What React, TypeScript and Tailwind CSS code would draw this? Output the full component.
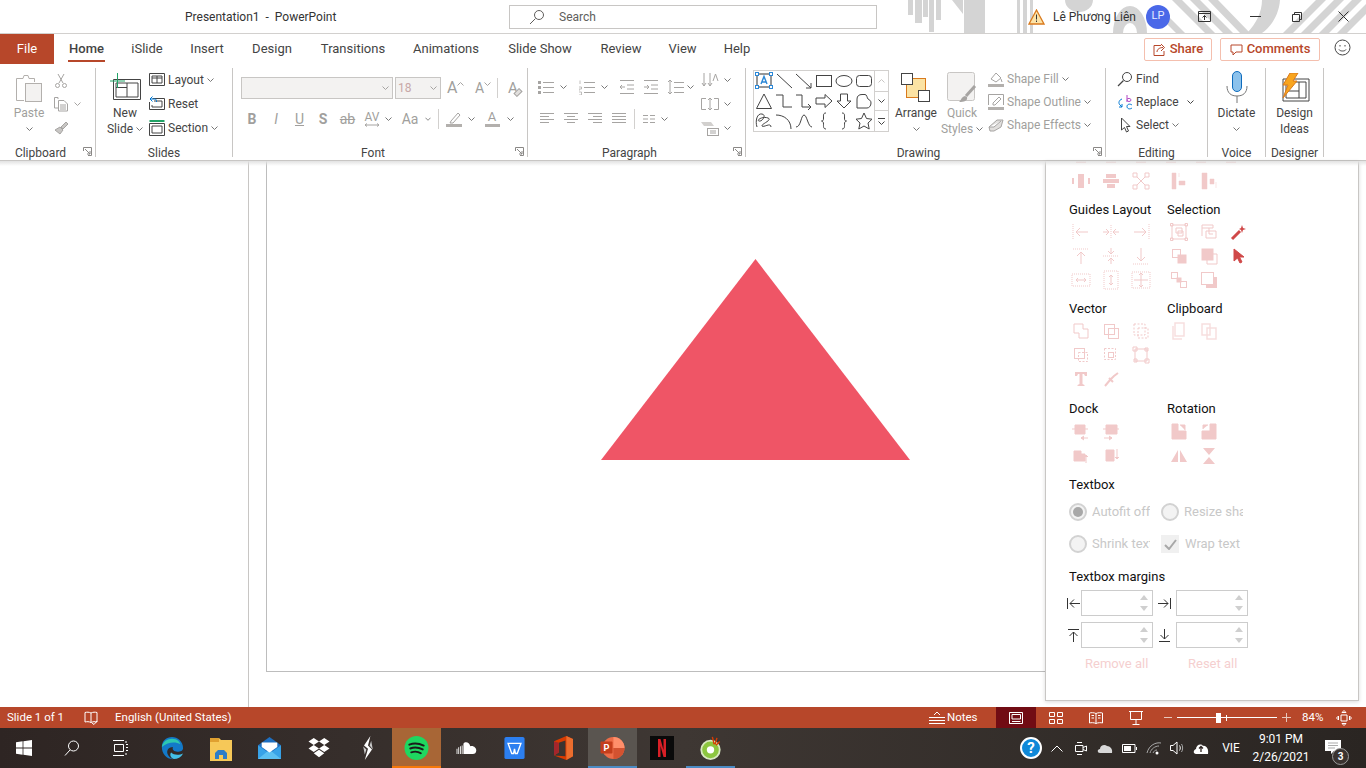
import type { ReactNode } from 'react'

const G = '#a6a4a2' // disabled ribbon icon
const D = '#444444' // enabled ribbon icon
const P = '#f1c9c9' // disabled panel icon

function Chev({ color = '#777777', className = '' }: { color?: string; className?: string }) {
  return (
    <svg width="7" height="4" viewBox="0 0 7 4" fill="none" stroke={color} className={className}>
      <path d="M.5.5 3.5 3.5 6.5.5" />
    </svg>
  )
}

function Ico({ w = 16, h = 16, c = D, children }: { w?: number; h?: number; c?: string; children: ReactNode }) {
  return (
    <svg width={w} height={h} viewBox={`0 0 ${w} ${h}`} fill="none" stroke={c} strokeWidth="1" className="shrink-0">
      {children}
    </svg>
  )
}

function Group({ label, className, launcher, children }: { label: string; className: string; launcher?: boolean; children: ReactNode }) {
  return (
    <div className={`relative flex h-[89px] shrink-0 flex-col border-r border-[#c8c6c4] ${className}`}>
      <div className="flex h-[77px] shrink-0">{children}</div>
      <div className={`text-center text-[12px] leading-[16px] text-[#444444] ${launcher ? 'pr-[14px]' : ''}`}>{label}</div>
      {launcher && (
        <svg width="9" height="9" viewBox="0 0 9 9" fill="none" stroke="#8a8886" className="absolute bottom-[1px] right-[3px]">
          <path d="M.5 4V.5H8.5V8.5H5M2 2 7 7M7 4V7H4" />
        </svg>
      )}
    </div>
  )
}

function Big({ icon, lines, chevLine, dim, className }: { icon: ReactNode; lines: string[]; chevLine?: boolean; dim?: boolean; className: string }) {
  return (
    <div className={`flex shrink-0 flex-col items-center pt-[2px] text-[12px] leading-[16px] ${dim ? 'text-[#a19f9d]' : 'text-[#444444]'} ${className}`}>
      <div className="flex h-[35px] items-center justify-center">{icon}</div>
      {lines.map((l, i) => (
        <div key={l} className="flex items-center gap-[3px] whitespace-nowrap">
          {l}
          {chevLine && i === lines.length - 1 && <Chev />}
        </div>
      ))}
      {!chevLine && lines.length === 1 && (
        <div className="flex h-[16px] items-center">
          <Chev />
        </div>
      )}
    </div>
  )
}

function Small({ icon, text, dim, chev = true, h = 'h-[24px]' }: { icon: ReactNode; text: string; dim?: boolean; chev?: boolean; h?: string }) {
  return (
    <div className={`flex items-center whitespace-nowrap text-[12px] ${h} ${dim ? 'text-[#a19f9d]' : 'text-[#444444]'}`}>
      <div className="flex w-[16px] justify-center">{icon}</div>
      <span className="ml-[3px]">{text}</span>
      {chev && <Chev className="ml-[3px]" />}
    </div>
  )
}

function Cell({ className, children }: { className: string; children: ReactNode }) {
  return <div className={`flex shrink-0 items-center justify-center ${className}`}>{children}</div>
}

const lines = (x1: number, x2: number, ys: number[]) => ys.map((y) => `M${x1} ${y}H${x2}`).join('')

const shapes: ReactNode[] = [
  <>
    <rect x="3" y="3" width="14" height="13" stroke="#333" />
    <rect x="1.5" y="1.5" width="3" height="3" fill="#fff" stroke="#2b88d8" />
    <rect x="15.5" y="1.5" width="3" height="3" fill="#fff" stroke="#2b88d8" />
    <rect x="1.5" y="14.5" width="3" height="3" fill="#fff" stroke="#2b88d8" />
    <rect x="15.5" y="14.5" width="3" height="3" fill="#fff" stroke="#2b88d8" />
    <path d="M7 13 10 5.5 13 13M8 11H12" stroke="#2b88d8" strokeWidth="1.4" />
  </>,
  <path d="M3 3 18 17" />,
  <path d="M2 3 17 17M17 12V17H12" />,
  <rect x="2.5" y="4.5" width="15" height="11" />,
  <ellipse cx="10" cy="10" rx="8" ry="5.5" />,
  <rect x="2.5" y="4.5" width="15" height="11" rx="3" />,
  <path d="M10 3 17.5 17.5H2.5Z" />,
  <path d="M2 4H9V16H18" />,
  <path d="M2 4H8V16H17M14 13 17 16 14 19" />,
  <path d="M2 7H11V3.5L18 10 11 16.5V13H2Z" />,
  <path d="M6.5 3H13.5V10H17L10 17 3 10H6.5Z" />,
  <path d="M3 8C3 5 5 3.5 8 3.5H11C13 3.5 13 7 14 8S17 9 17 12 15 17 13 17H3Z" />,
  <path d="M3 16C1 10 3 2 8 3S8 11 5 10 9 5 14 7 7 13 8 15 17 11 17 16" />,
  <path d="M2 4C10 4 17 9 17 18" />,
  <path d="M2 16C7 16 7 4 10 4S14 16 18 16" />,
  <path d="M12 2C9 2 9.5 4 9.5 7S9 9.5 7.5 10C9 10.5 9.5 11 9.5 13S9 18 12 18" />,
  <path d="M8 2C11 2 10.5 4 10.5 7S11 9.5 12.5 10C11 10.5 10.5 11 10.5 13S11 18 8 18" />,
  <path d="M10 2 12.5 7.5 18 8.2 14 12 15.2 18 10 15 4.8 18 6 12 2 8.2 7.5 7.5Z" />,
]

function Gallery() {
  return (
    <div className="ml-[7px] mt-[2px] flex h-[62px] w-[136px] shrink-0 border border-[#d2d0ce]">
      <div className="grid w-[120px] grid-cols-[repeat(6,20px)] grid-rows-[repeat(3,20px)]">
        {shapes.map((s, i) => (
          <svg key={i} width="20" height="20" viewBox="0 0 20 20" fill="none" stroke="#444444">
            {s}
          </svg>
        ))}
      </div>
      <div className="flex w-[14px] flex-col border-l border-[#d2d0ce]">
        <Cell className="h-[20px]">
          <Chev color="#c8c6c4" className="rotate-180" />
        </Cell>
        <Cell className="h-[20px] border-y border-[#d2d0ce]">
          <Chev color="#444444" />
        </Cell>
        <Cell className="h-[20px] flex-col gap-[2px]">
          <div className="h-px w-[7px] bg-[#444444]" />
          <Chev color="#444444" />
        </Cell>
      </div>
    </div>
  )
}

function Ribbon() {
  return (
    <div className="flex h-[97px] shrink-0 border-b border-[#c8c6c4] bg-white pt-[4px]">
      <Group label="Clipboard" className="w-[96px]" launcher>
        <Big
          dim
          className="ml-[5px] w-[48px]"
          lines={['Paste']}
          icon={
            <Ico w={30} h={32} c="#b3b0ad">
              <path d="M2.5 6.5H9L10 3.5H14L15 6.5H20.5V10M10 28.5H2.5V6.5" />
              <rect x="11.5" y="11.5" width="16" height="18" fill="#f3f2f1" />
            </Ico>
          }
        />
        <div className="flex flex-col">
          <Cell className="h-[24px] w-[16px] pt-[1px]">
            <Ico c={G}>
              <path d="M5 1 10 10M11 1 6 10" />
              <circle cx="4.5" cy="12.5" r="2" />
              <circle cx="11.5" cy="12.5" r="2" />
            </Ico>
          </Cell>
          <div className="flex h-[24px] items-center">
            <Cell className="w-[16px]">
              <Ico c={G}>
                <path d="M5 3V1.5H1.5V12H5M5.5 4.5H11L14.5 8V15H5.5ZM7 9H13M7 11H13M7 13H13" />
              </Ico>
            </Cell>
            <Chev className="ml-[5px]" color="#a6a4a2" />
          </div>
          <Cell className="h-[24px] w-[16px]">
            <Ico c={G}>
              <path d="M8 7 13 2 15 4 10 9ZM7 7 10 10 7 14 2 10Z" fill="#c8c6c4" />
            </Ico>
          </Cell>
        </div>
      </Group>

      <Group label="Slides" className="w-[137px]">
        <Big
          chevLine
          className="ml-[4px] w-[50px]"
          lines={['New', 'Slide']}
          icon={
            <Ico w={31} h={32} c="#444444">
              <path d="M3.5 7.5H30.5V27.5H3.5ZM6 11H28V25H6ZM17 11V25M6 15.5H17" />
              <path d="M0 9H15M7.5 1V16" stroke="#21a366" />
            </Ico>
          }
        />
        <div className="-ml-[1px] flex flex-col">
          <Small
            text="Layout"
            icon={
              <Ico>
                <path d="M.5 1.5H15.5V13.5H.5ZM3 4H13V11H3ZM8 4V11M3 6H13" />
              </Ico>
            }
          />
          <Small
            text="Reset"
            chev={false}
            icon={
              <Ico>
                <path d="M3.5 2.5H15.5V13.5H.5V6M5 5H13V11H3V9" />
                <path d="M1 3 3.5.5M1 3 3.5 5.5M1 3H6C7 3 7.5 4 7.5 6" stroke="#0078d4" />
              </Ico>
            }
          />
          <Small
            text="Section"
            icon={
              <Ico>
                <path d="M.5 1H15.5" stroke="#21a366" strokeWidth="2" />
                <path d="M.5 3.5H15.5V15.5H.5ZM3 6H13V13H3Z" />
              </Ico>
            }
          />
        </div>
      </Group>

      <Group label="Font" className="w-[295px]" launcher>
        <div className="flex flex-col">
          <div className="ml-[8px] mt-[9px] flex items-center">
            <div className="flex h-[22px] w-[152px] items-center justify-end border border-[#c8c6c4] bg-[#f3f2f1] pr-[3px]">
              <Chev color="#a6a4a2" />
            </div>
            <div className="ml-[2px] flex h-[22px] w-[46px] items-center justify-between border border-[#c8c6c4] bg-[#f3f2f1] pl-[2px] pr-[3px] text-[12px] text-[#c8a8a8]">
              18
              <Chev color="#a6a4a2" />
            </div>
            <div className="ml-[6px] flex w-[24px] items-start text-[16px] leading-[18px] text-[#a19f9d]">
              A<Chev color="#a6a4a2" className="mt-[3px] rotate-180" />
            </div>
            <div className="ml-[4px] flex w-[20px] items-start text-[14px] leading-[18px] text-[#a19f9d]">
              A<Chev color="#a6a4a2" className="mt-[3px]" />
            </div>
            <div className="mx-[2px] h-[20px] w-px bg-[#d2d0ce]" />
            <Cell className="ml-[6px] w-[18px]">
              <span className="text-[15px] leading-none text-[#a19f9d]">A</span>
              <div className="-ml-[4px] mt-[8px] h-[5px] w-[8px] rotate-[-45deg] border border-[#a6a4a2] bg-[#e1dfdd]" />
            </Cell>
          </div>
          <div className="ml-[7px] mt-[8px] flex h-[24px] items-center text-[14px] text-[#a19f9d]">
            <Cell className="w-[24px] font-bold">B</Cell>
            <Cell className="w-[24px] italic">I</Cell>
            <Cell className="w-[23px] underline">U</Cell>
            <Cell className="w-[24px] font-bold">S</Cell>
            <Cell className="w-[25px] line-through">ab</Cell>
            <Cell className="w-[24px] flex-col text-[12px] leading-[11px]">
              AV
              <Ico w={16} h={4} c={G}>
                <path d="M1 2H15M3 .5 1 2 3 3.5M13 .5 15 2 13 3.5" />
              </Ico>
            </Cell>
            <Cell className="w-[8px]">
              <Chev />
            </Cell>
            <Cell className="ml-[3px] w-[30px] text-[14px]">Aa</Cell>
            <Cell className="w-[6px]">
              <Chev />
            </Cell>
            <div className="ml-[7px] h-[20px] w-px bg-[#d2d0ce]" />
            <Cell className="ml-[6px] w-[18px]">
              <Ico c={G}>
                <path d="M5 10 12 2 14 4 7 12 4 12Z" />
                <path d="M0 14.5H16" stroke="#b3b0ad" strokeWidth="3" />
              </Ico>
            </Cell>
            <Chev className="ml-[5px]" />
            <Cell className="ml-[8px] w-[18px] flex-col text-[13px] leading-[12px]">
              A
              <div className="mt-[1px] h-[3px] w-[15px] bg-[#b3b0ad]" />
            </Cell>
            <Chev className="ml-[6px]" />
          </div>
        </div>
      </Group>

      <Group label="Paragraph" className="w-[218px]" launcher>
        <div className="flex w-[173px] flex-col">
          <div className="ml-[10px] mt-[7px] flex h-[24px] items-center">
            <Cell className="w-[16px]">
              <Ico c={G}>
                <path d={lines(5, 16, [3.5, 8.5, 13.5])} />
                <path d="M0 2H3V5H0ZM0 7H3V10H0ZM0 12H3V15H0Z" fill="#a6a4a2" stroke="none" />
              </Ico>
            </Cell>
            <Chev className="ml-[6px]" />
            <Cell className="ml-[12px] w-[16px]">
              <Ico c={G}>
                <path d={lines(5, 16, [3.5, 8.5, 13.5])} />
                <path d="M1 1.5V5M0 8H2.5V10H0V12M0 13H2.5V16H0" strokeWidth=".7" />
              </Ico>
            </Cell>
            <Chev className="ml-[6px]" />
            <Cell className="ml-[11px] w-[16px]">
              <Ico c={G}>
                <path d={lines(1, 15, [1.5, 14.5]) + lines(8, 15, [6, 10])} />
                <path d="M6 8H1M3 6 1 8 3 10" />
              </Ico>
            </Cell>
            <Cell className="ml-[8px] w-[16px]">
              <Ico c={G}>
                <path d={lines(1, 15, [1.5, 14.5]) + lines(8, 15, [6, 10])} />
                <path d="M1 8H6M4 6 6 8 4 10" />
              </Ico>
            </Cell>
            <Cell className="ml-[8px] w-[17px]">
              <Ico w={17} c={G}>
                <path d={lines(7, 17, [3.5, 8.5, 13.5])} />
                <path d="M3 1V15M1 3 3 1 5 3M1 13 3 15 5 13" />
              </Ico>
            </Cell>
            <Chev className="ml-[3px]" />
          </div>
          <div className="ml-[7px] mt-[8px] flex h-[24px] items-center">
            {[
              lines(1, 15, [2.5, 8.5]) + lines(1, 10, [5.5, 11.5]),
              lines(1, 15, [2.5, 8.5]) + lines(4, 12, [5.5, 11.5]),
              lines(1, 15, [2.5, 8.5]) + lines(6, 15, [5.5, 11.5]),
              lines(1, 15, [2.5, 5.5, 8.5, 11.5]),
            ].map((d, i) => (
              <Cell key={i} className="w-[24px]">
                <Ico c={G}>
                  <path d={d} />
                </Ico>
              </Cell>
            ))}
            <div className="ml-[3px] h-[20px] w-px bg-[#d2d0ce]" />
            <Cell className="ml-[6px] w-[16px]">
              <Ico c={G}>
                <path d={lines(2, 7, [4.5, 8, 11.5]) + lines(9, 14, [4.5, 8, 11.5])} />
              </Ico>
            </Cell>
            <Chev className="ml-[4px]" />
          </div>
        </div>
        <div className="flex flex-col">
          <div className="flex h-[24px] items-center">
            <Ico w={18} h={16} c={G}>
              <path d="M3 1V14M1 11 3 14 5 11M9 1V14M7 11 9 14 11 11M12 9 14.5 2 17 9" />
            </Ico>
            <Chev className="ml-[5px]" />
          </div>
          <div className="flex h-[24px] items-center">
            <Ico w={18} h={16} c={G}>
              <path d="M5 2.5H.5V13.5H5M13 2.5H17.5V13.5H13M9 2V14M7 4 9 2 11 4M7 12 9 14 11 12" />
            </Ico>
            <Chev className="ml-[5px]" />
          </div>
          <div className="flex h-[24px] items-center">
            <Ico w={18} h={16} c={G}>
              <path d="M0 2H10L13 6H3Z" fill="#d2d0ce" stroke="none" />
              <rect x="6.5" y="8.5" width="11" height="7" />
              <path d="M9 11H15M9 13H15" />
            </Ico>
            <Chev className="ml-[5px]" />
          </div>
        </div>
      </Group>

      <Group label="Drawing" className="w-[360px]" launcher>
        <Gallery />
        <Big
          className="w-[54px]"
          lines={['Arrange']}
          icon={
            <Ico w={30} h={30} c="#444444">
              <rect x="5.5" y="5.5" width="19" height="19" fill="#fbe3a4" stroke="#d97a1d" />
              <rect x=".5" y=".5" width="11" height="11" fill="#fff" />
              <rect x="17.5" y="17.5" width="11" height="11" fill="#fff" />
            </Ico>
          }
        />
        <Big
          dim
          chevLine
          className="w-[38px]"
          lines={['Quick', 'Styles']}
          icon={
            <Ico w={30} h={32} c="#c8c6c4">
              <rect x=".5" y=".5" width="27" height="28" rx="2" fill="#f3f2f1" />
              <path d="M28 14 19 24" stroke="#a6a4a2" strokeWidth="3" />
              <path d="M18 24C14 25 14 29 12 30 17 30 21 29 20 25Z" fill="#a6a4a2" stroke="none" />
            </Ico>
          }
        />
        <div className="ml-[7px] -mt-px flex flex-col">
          <Small
            dim
            h="h-[23px]"
            text="Shape Fill"
            icon={
              <Ico c={G}>
                <path d="M3 8 8 2 13 7 8 11ZM13 8 14 11" />
                <path d="M0 14.5H16" stroke="#b3b0ad" strokeWidth="3" />
              </Ico>
            }
          />
          <Small
            dim
            h="h-[23px]"
            text="Shape Outline"
            icon={
              <Ico c={G}>
                <path d="M.5 11V.5H15.5V11M5 9 11 3 13 5 7 11H5Z" />
                <path d="M0 14.5H16" stroke="#b3b0ad" strokeWidth="3" />
              </Ico>
            }
          />
          <Small
            dim
            h="h-[23px]"
            text="Shape Effects"
            icon={
              <Ico c={G}>
                <path d="M1 10 9 3H15L13 10 6 14H2ZM1 10 6 10 13 4" fill="#e1dfdd" />
              </Ico>
            }
          />
        </div>
      </Group>

      <Group label="Editing" className="w-[102px]">
        <div className="ml-[11px] -mt-px flex flex-col">
          <Small
            chev={false}
            h="h-[23px]"
            text="Find"
            icon={
              <Ico>
                <circle cx="10" cy="6" r="4.5" />
                <path d="M6.5 9.5 1 15" strokeWidth="1.3" />
              </Ico>
            }
          />
          <div className="flex h-[24px] items-center text-[12px] text-[#444444]">
            <Ico>
              <path d="M10 1V8M10 5.5C10 4 14 4 14 6S10 8 10 6" stroke="#b146c2" />
              <path d="M5 5C2 6 1 9 3 11L5 13M5 10V13H2" stroke="#0078d4" />
              <path d="M15 11C13 9.5 10 10 10 12.5S13 15.5 15 14" stroke="#0078d4" />
            </Ico>
            <span className="ml-[3px]">Replace</span>
            <Chev className="ml-[8px]" color="#444444" />
          </div>
          <Small
            h="h-[22px]"
            text="Select"
            icon={
              <Ico>
                <path d="M4.5 1V13L7.5 10.5 9.5 15 11.5 14 9.5 9.5H13Z" />
              </Ico>
            }
          />
        </div>
      </Group>

      <Group label="Voice" className="w-[58px]">
        <Big
          className="w-full"
          lines={['Dictate']}
          icon={
            <Ico w={22} h={33} c="#444444">
              <rect x="6.5" y=".5" width="9" height="20" rx="4.5" fill="#8cc2ec" stroke="#0f6cbd" />
              <path d="M1 15C1 22 5 25 11 25S21 22 21 15M11 25V32" stroke="#777" />
            </Ico>
          }
        />
      </Group>

      <Group label="Designer" className="w-[58px]">
        <Big
          chevLine={false}
          className="w-full"
          lines={['Design', 'Ideas']}
          icon={
            <Ico w={30} h={30} c="#444444">
              <path d="M3 6H29V28H3ZM6 9H26V25H6ZM19 9V25M6 18H19" />
              <path d="M10 0H18L13 8H17L3 25 8 12H3Z" fill="#f8a51f" stroke="#d97a1d" />
            </Ico>
          }
        />
      </Group>
    </div>
  )
}

const iconsTop: ReactNode[] = [
  <path d="M1 7H3V13H1ZM7 3H13V17H7ZM17 7H19V13H17ZM3 10H17" fill={P} strokeWidth="0" />,
  <path d="M5 3H15V7H5ZM2 8H18V12H2ZM6 13H14V17H6Z" fill={P} stroke="none" />,
  <path d="M2 2H6V6H2ZM14 2H18V6H14ZM2 14H6V18H2ZM14 14H18V18H14ZM6 6 14 14M14 6 6 14" />,
  <path d="M3 2H7V18H3ZM10 2V6M10 14H16V10H10Z" fill={P} strokeWidth=".5" />,
  <path d="M3 2H8V18H3ZM11 8H15V13H11ZM17 11V17" fill={P} strokeWidth=".5" />,
]

const arrowGuide = (d: string, g: string) => (
  <>
    <path d={g} strokeDasharray="1 1" />
    <path d={d} />
  </>
)

const guides: ReactNode[] = [
  arrowGuide('M17 10H5M9 6 5 10 9 14', 'M2 2V18'),
  arrowGuide('M2 10H8M5 7 8 10 5 13M18 10H12M15 7 12 10 15 13', 'M10 3V17'),
  arrowGuide('M3 10H15M11 6 15 10 11 14', 'M18 2V18'),
  arrowGuide('M10 18V6M6 10 10 6 14 10', 'M2 3H18'),
  arrowGuide('M10 2V8M7 5 10 8 13 5M10 18V12M7 15 10 12 13 15', 'M2 10H18'),
  arrowGuide('M10 2V15M6 11 10 15 14 11', 'M2 18H18'),
  arrowGuide('M5 10H15M7 8 5 10 7 12M13 8 15 10 13 12', 'M1 4H19V16H1Z'),
  arrowGuide('M10 5V15M8 7 10 5 12 7M8 13 10 15 12 13', 'M3 1H17V19H3Z'),
  arrowGuide('M3 10H17M10 3V17M8 5 10 3 12 5M8 15 10 17 12 15', 'M1 2H19V18H1Z'),
]

const selection: ReactNode[] = [
  <path d="M3 3H17V17H3ZM7 6H13V11H7ZM9 9H14V14H9ZM1.5 1.5H4V4H1.5ZM16 1.5H18.5V4H16ZM1.5 16H4V18.5H1.5ZM16 16H18.5V18.5H16Z" />,
  <path d="M3 3H14V6H3ZM3 6V14M7 9H17V16H7ZM10 6V12H14" />,
  <g>
    <path d="M3 17 11 9" stroke="#d04848" strokeWidth="3" />
    <path d="M13 3 14 6 17 7 14 8 13 11 12 8 10 7 12 6Z" fill="#d04848" stroke="none" />
  </g>,
  <>
    <rect x="3.5" y="3.5" width="8" height="8" />
    <rect x="9" y="9" width="8" height="8" fill={P} />
  </>,
  <>
    <rect x="3" y="3" width="11" height="11" fill={P} />
    <path d="M14 8H18V18H8V14" />
  </>,
  <path d="M5 3V15L8.5 12 11 17 13 16 10.5 11H15Z" fill="#d04848" stroke="#d04848" />,
  <>
    <rect x="2.5" y="2.5" width="6" height="6" />
    <rect x="8" y="8" width="4" height="4" fill={P} />
    <rect x="11.5" y="11.5" width="6" height="6" />
  </>,
  <>
    <rect x="2.5" y="2.5" width="12" height="12" />
    <path d="M18 7V18H7V15H15V7Z" fill={P} stroke="none" />
  </>,
]

const vector: ReactNode[] = [
  <path d="M3 3H12V8H17V17H8V12H3Z" />,
  <>
    <rect x="3.5" y="3.5" width="10" height="10" />
    <rect x="7.5" y="7.5" width="10" height="10" />
  </>,
  <>
    <rect x="3" y="3" width="11" height="11" strokeDasharray="2 1.5" />
    <rect x="7" y="7" width="10" height="10" strokeDasharray="2 1.5" />
  </>,
  <>
    <rect x="3.5" y="3.5" width="10" height="10" />
    <rect x="7.5" y="7.5" width="9" height="9" strokeDasharray="2 1.5" />
  </>,
  <>
    <rect x="3.5" y="3.5" width="11" height="11" strokeDasharray="2 1.5" />
    <rect x="7.5" y="7.5" width="5" height="5" />
  </>,
  <path d="M4 4H16V16H4ZM2 2H6V6H2ZM14 3H17V6H14ZM3 14H6V17H3ZM14 14H18V18H14Z" />,
]

const vectorExtra: ReactNode[] = [
  <path d="M4 3H16V7H14L13 5H11.5V15L13.5 16V17H6.5V16L8.5 15V5H7L6 7H4Z" fill={P} stroke="none" />,
  <path d="M4 17 9 11 13 7 17 4M8 9 12 13" strokeWidth="2" />,
]

const dock: ReactNode[] = [
  <path d="M4 3H14V12H4ZM1 7H17M10 16H17M13 14 10 16 13 18" fill={P} />,
  <path d="M5 3H16V12H5ZM2 7H18M3 16H11M8 14 11 16 8 18" fill={P} />,
  <path d="M3 5H10V8H14V15H3ZM15 17V9M13 11 15 9 17 11" fill={P} />,
  <path d="M5 4H13V15H5ZM16 3V13M14 11 16 13 18 11" fill={P} />,
]

const rotation: ReactNode[] = [
  <path d="M3 2H9V9H17V17H3Z M11 3 16 3 16 8" fill={P} />,
  <path d="M11 2H17V17H3V9H11Z M4 7 4 3 9 3" fill={P} />,
  <path d="M9 4V16H2ZM11 4V16H18Z" fill={P} stroke="none" />,
  <path d="M4 2H16L10 9ZM10 11 16 18H4Z" fill={P} stroke="none" />,
]

const clipboardIcons: ReactNode[] = [
  <path d="M6 2H15V15H6ZM4 5V18H13" strokeWidth="1.5" opacity=".6" />,
  <path d="M3 3H11V14H3ZM8 7H17V18H8Z" strokeWidth="1.5" opacity=".6" />,
]

function PI({ children }: { children: ReactNode }) {
  return (
    <div className="flex h-[24px] w-[30px] items-center justify-center">
      <svg width="20" height="20" viewBox="0 0 20 20" fill="none" stroke={P}>
        {children}
      </svg>
    </div>
  )
}

function Heading({ children, className = '' }: { children: ReactNode; className?: string }) {
  return <div className={`h-[20px] pl-[3px] text-[13px] leading-[20px] text-[#111111] ${className}`}>{children}</div>
}

function Section({ left, right, a, b }: { left: string; right: string; a: ReactNode[]; b: ReactNode[] }) {
  return (
    <div className="mt-[7px] flex">
      <div className="w-[98px] shrink-0">
        <Heading className="whitespace-nowrap">{left}</Heading>
        <div className="grid grid-cols-[repeat(3,30px)]">
          {a.map((n, i) => (
            <PI key={i}>{n}</PI>
          ))}
        </div>
      </div>
      <div>
        <Heading>{right}</Heading>
        <div className="grid grid-cols-[repeat(3,30px)]">
          {b.map((n, i) => (
            <PI key={i}>{n}</PI>
          ))}
        </div>
      </div>
    </div>
  )
}

function Radio({ checked, label, className }: { checked?: boolean; label: string; className: string }) {
  return (
    <div className={`flex items-center ${className}`}>
      <div className="flex h-[18px] w-[18px] shrink-0 items-center justify-center rounded-full border-2 border-[#d2d2d2] bg-[#f3f3f3]">
        {checked && <div className="h-[10px] w-[10px] rounded-full bg-[#a8a8a8]" />}
      </div>
      <span className="ml-[5px] overflow-hidden whitespace-nowrap text-[13px] text-[#c8c8c8]">{label}</span>
    </div>
  )
}

function Spin() {
  return (
    <div className="flex h-[26px] w-[72px] shrink-0 flex-col items-end justify-center gap-[6px] border border-[#cccccc] pr-[4px]">
      <div className="h-0 w-0 border-x-[4px] border-b-[5px] border-x-transparent border-b-[#cfcfcf]" />
      <div className="h-0 w-0 border-x-[4px] border-t-[5px] border-x-transparent border-t-[#cfcfcf]" />
    </div>
  )
}

function SidePanel() {
  return (
    <div className="absolute bottom-[6px] right-[7px] top-0 w-[314px] overflow-hidden border-x border-b border-[#c8c6c4] bg-white pl-[20px] shadow-[0_1px_4px_rgba(0,0,0,0.15)]">
      <div className="flex h-[8px] items-start overflow-hidden pl-[10px]">
        {[0, 30, 60, 112, 142, 172].map((x) => (
          <div key={x} className="mr-[20px] h-[2px] w-[10px] shrink-0 bg-[#f1c9c9]" />
        ))}
      </div>
      <div className="flex">
        <div className="flex w-[98px] shrink-0">
          {iconsTop.slice(0, 3).map((n, i) => (
            <PI key={i}>{n}</PI>
          ))}
        </div>
        <div className="flex">
          {iconsTop.slice(3).map((n, i) => (
            <PI key={i}>{n}</PI>
          ))}
        </div>
      </div>
      <Section left="Guides Layout" right="Selection" a={guides} b={selection} />
      <div className="mt-[7px] flex">
        <div className="w-[98px] shrink-0">
          <Heading>Vector</Heading>
          <div className="grid grid-cols-[repeat(3,30px)]">
            {[...vector, ...vectorExtra].map((n, i) => (
              <PI key={i}>{n}</PI>
            ))}
          </div>
        </div>
        <div>
          <Heading>Clipboard</Heading>
          <div className="flex">
            {clipboardIcons.map((n, i) => (
              <PI key={i}>{n}</PI>
            ))}
          </div>
        </div>
      </div>
      <div className="mt-[8px] flex">
        <div className="w-[98px] shrink-0">
          <Heading>Dock</Heading>
          <div className="mt-[1px] grid grid-cols-[repeat(3,30px)]">
            <PI>{dock[0]}</PI>
            <PI>{dock[1]}</PI>
            <div />
            <PI>{dock[2]}</PI>
            <PI>{dock[3]}</PI>
          </div>
        </div>
        <div>
          <Heading>Rotation</Heading>
          <div className="mt-[1px] grid grid-cols-[repeat(2,30px)]">
            {rotation.map((n, i) => (
              <PI key={i}>{n}</PI>
            ))}
          </div>
        </div>
      </div>
      <Heading className="mt-[7px]">Textbox</Heading>
      <div className="ml-[3px] pt-[1px]">
        <div className="flex h-[32px] items-center">
          <Radio checked label="Autofit off" className="w-[92px] pr-[11px]" />
          <Radio label="Resize shape" className="w-[82px]" />
        </div>
        <div className="flex h-[32px] items-center">
          <Radio label="Shrink text" className="w-[92px] pr-[11px]" />
          <div className="flex w-[82px] items-center">
            <div className="flex h-[18px] w-[18px] shrink-0 items-center justify-center bg-[#f0f0f0]">
              <Ico w={13} h={11} c="#a8a8a8">
                <path d="M1 6 5 10 12 1" strokeWidth="2" />
              </Ico>
            </div>
            <span className="ml-[6px] whitespace-nowrap text-[13px] text-[#c8c8c8]">Wrap text</span>
          </div>
        </div>
      </div>
      <Heading className="mt-[7px]">Textbox margins</Heading>
      <div className="mt-[3px] flex items-center">
        <Cell className="w-[15px]">
          <Ico w={13} h={11} c="#333333">
            <path d="M.5 0V11M13 5.5H3M7 1.5 3 5.5 7 9.5" />
          </Ico>
        </Cell>
        <Spin />
        <Cell className="w-[23px]">
          <Ico w={13} h={11} c="#333333">
            <path d="M12.5 0V11M0 5.5H10M6 1.5 10 5.5 6 9.5" />
          </Ico>
        </Cell>
        <Spin />
      </div>
      <div className="mt-[6px] flex items-center">
        <Cell className="w-[15px]">
          <Ico w={11} h={13} c="#333333">
            <path d="M0 .5H11M5.5 13V3M1.5 7 5.5 3 9.5 7" />
          </Ico>
        </Cell>
        <Spin />
        <Cell className="w-[23px]">
          <Ico w={11} h={13} c="#333333">
            <path d="M0 12.5H11M5.5 0V10M1.5 6 5.5 10 9.5 6" />
          </Ico>
        </Cell>
        <Spin />
      </div>
      <div className="mt-[6px] flex h-[20px] items-center text-[13px] text-[#f5cfcf]">
        <span className="ml-[19px] w-[103px] whitespace-nowrap">Remove all</span>
        <span className="whitespace-nowrap">Reset all</span>
      </div>
    </div>
  )
}

function TitleBar() {
  return (
    <div className="relative flex h-[34px] shrink-0 items-center border-b border-[#d2d0ce] bg-white text-[12px] text-[#333333]">
      <svg width="461" height="33" viewBox="905 0 461 33" fill="#d4d4d4" className="absolute left-[905px] top-0">
        <path d="M908 0H913V15H908ZM915 0H922V23H915ZM923 0H928V17H923ZM929 0H934V32H929ZM936 0H941V20H936ZM952 0H963V14ZM964 0H985V33H964ZM1017 0H1020V33H1017ZM1023 0H1027V33H1023ZM1030 0H1033V33H1030Z" />
        <path d="M1065 0A14 12 0 0 0 1093 0Z" />
        <path fillRule="evenodd" d="M1113 33A17 27 0 0 1 1147 33H1137A7 10 0 0 0 1123 33Z" />
        <path d="M1172 0H1182L1215 33H1205ZM1190 0H1200L1233 33H1223ZM1208 0H1218L1250 33H1240ZM1160 8 1185 33H1176L1160 17Z" />
        <path d="M1262 0H1280C1279 14 1272 26 1262 33H1247C1256 24 1262 12 1262 0Z" />
        <path d="M1316 0H1326L1293 33H1283ZM1334 0H1344L1311 33H1301ZM1352 0H1362L1329 33H1319ZM1366 4V14L1347 33H1337Z" />
      </svg>
      <div className="relative ml-[185px] w-[324px] whitespace-pre text-[12px]">Presentation1  -  PowerPoint</div>
      <div className="relative flex h-[24px] w-[368px] items-center border border-[#c8c6c4] bg-white text-[12px] text-[#605e5c]">
        <div className="ml-[19px]">
          <Ico c="#605e5c">
            <circle cx="10" cy="6" r="4.5" />
            <path d="M6.5 9.5 1 15" />
          </Ico>
        </div>
        <span className="ml-[14px]">Search</span>
      </div>
      <div className="relative ml-[151px] flex items-center">
        <Ico w={17} h={16}>
          <path d="M8.5 1 16 15H1Z" fill="#fce3a8" stroke="#d97a1d" strokeWidth="1.3" />
          <path d="M8.5 5.5V10.5M8.5 11.5V13" stroke="#333" />
        </Ico>
        <span className="ml-[8px] whitespace-nowrap text-[12px]">Lê Phương Liên</span>
        <div className="ml-[10px] flex h-[24px] w-[24px] items-center justify-center rounded-full bg-[#4a68e8] text-[11px] text-[#e8ecff]">LP</div>
        <div className="ml-[28px]">
          <Ico w={13} h={11} c="#333333">
            <path d="M.5 .5H12.5V10.5H.5ZM.5 2.5H12.5M6.5 9V4.5M4.5 6.5 6.5 4.5 8.5 6.5" />
          </Ico>
        </div>
        <div className="ml-[39px] h-px w-[11px] bg-[#333333]" />
        <div className="ml-[31px]">
          <Ico w={10} h={10} c="#333333">
            <path d="M.5 2.5H7.5V9.5H.5ZM2.5 2.5V.5H9.5V7.5H7.5" />
          </Ico>
        </div>
        <div className="ml-[36px]">
          <Ico w={11} h={11} c="#333333">
            <path d="M.5 .5 10.5 10.5M10.5 .5 .5 10.5" />
          </Ico>
        </div>
      </div>
    </div>
  )
}

const tabs = [
  { t: 'iSlide', c: 'w-[30px] ml-[27px]' },
  { t: 'Insert', c: 'w-[32px] ml-[29px]' },
  { t: 'Design', c: 'w-[40px] ml-[29px]' },
  { t: 'Transitions', c: 'w-[62px] ml-[30px]' },
  { t: 'Animations', c: 'w-[64px] ml-[30px]' },
  { t: 'Slide Show', c: 'w-[64px] ml-[30px]' },
  { t: 'Review', c: 'w-[40px] ml-[29px]' },
  { t: 'View', c: 'w-[27px] ml-[28px]' },
  { t: 'Help', c: 'w-[26px] ml-[28px]' },
]

function TabRow() {
  return (
    <div className="flex h-[30px] shrink-0 bg-white text-[13px] text-[#444444]">
      <div className="flex h-[30px] w-[54px] items-center justify-center bg-[#b7472a] text-white">File</div>
      <div className="relative ml-[14px] flex w-[37px] items-center justify-center font-medium">
        Home
        <div className="absolute bottom-[2px] left-0 right-0 h-[2px] bg-[#b7472a]" />
      </div>
      {tabs.map((x) => (
        <div key={x.t} className={`flex items-center justify-center whitespace-nowrap ${x.c}`}>
          {x.t}
        </div>
      ))}
      <div className="ml-auto mr-[46px] flex items-center">
        <div className="flex h-[23px] w-[68px] items-center justify-center gap-[4px] rounded-[2px] border border-[#f4bfae] text-[13px] font-medium text-[#b7472a]">
          <Ico w={13} h={13} c="#b7472a">
            <path d="M8 2.5H1V12.5H11V8M4 9C4 6 7 4.5 10 4.5M8 1 11.5 4.5 8 8" />
          </Ico>
          Share
        </div>
        <div className="ml-[8px] flex h-[23px] w-[100px] items-center justify-center gap-[4px] rounded-[2px] border border-[#f4bfae] text-[13px] font-medium text-[#b7472a]">
          <Ico w={13} h={13} c="#b7472a">
            <path d="M1 2H12V9H6L3 12V9H1Z" />
          </Ico>
          Comments
        </div>
      </div>
      <div className="absolute right-[15px] top-[39px]">
        <Ico w={17} h={17} c="#444444">
          <circle cx="8.5" cy="8.5" r="7.5" />
          <path d="M5 10.5C6 12.5 11 12.5 12 10.5M6 6V7.5M11 6V7.5" />
        </Ico>
      </div>
    </div>
  )
}

function StatusBar() {
  return (
    <div className="flex h-[21px] shrink-0 items-center bg-[#b7472a] text-[11.5px] text-white">
      <span className="ml-[7px] w-[56px] whitespace-nowrap">Slide 1 of 1</span>
      <div className="ml-[21px]">
        <Ico w={14} h={14} c="#ffffff">
          <path d="M7 2C5 1 3 1 1 1.5V11C3 10.5 5 10.5 7 11.5 9 10.5 11 10.5 13 11V1.5C11 1 9 1 7 2ZM7 2V11.5M8 12 10 13.5 13 10" />
        </Ico>
      </div>
      <span className="ml-[17px] whitespace-nowrap">English (United States)</span>
      <div className="ml-auto flex h-full items-center">
        <Ico w={16} h={14} c="#ffffff">
          <path d="M0 6.5H16M0 9.5H16M0 12.5H16M5 4 8 1 11 4" />
        </Ico>
        <span className="ml-[2px] w-[30px] whitespace-nowrap">Notes</span>
        <div className="ml-[19px] flex h-full w-[40px] items-center justify-center bg-[#710c14]">
          <Ico w={14} h={12} c="#ffffff">
            <path d="M.5 .5H13.5V11.5H.5ZM.5 .5V11.5M3 2.5H11.5V7H3ZM3 9.5H11.5" />
          </Ico>
        </div>
        <Cell className="w-[40px]">
          <Ico w={14} h={12} c="#ffffff">
            <path d="M.5 .5H5.5V4.5H.5ZM8.5 .5H13.5V4.5H8.5ZM.5 7.5H5.5V11.5H.5ZM8.5 7.5H13.5V11.5H8.5Z" />
          </Ico>
        </Cell>
        <Cell className="w-[40px]">
          <Ico w={14} h={12} c="#ffffff">
            <path d="M7 1.5C5 .5 2 .5 .5 1V11C2 10.5 5 10.5 7 11.5 9 10.5 12 10.5 13.5 11V1C12 .5 9 .5 7 1.5ZM7 1.5V11.5M2.5 3.5H5M2.5 6H5M9 3.5H11.5M9 6H11.5" />
          </Ico>
        </Cell>
        <Cell className="w-[40px]">
          <Ico w={14} h={14} c="#ffffff">
            <path d="M0 .5H14M1.5 .5V8.5H12.5V.5M7 8.5V13M3.5 13.5H10.5" />
          </Ico>
        </Cell>
        <div className="ml-[8px] h-px w-[8px] bg-[#e8c8bc]" />
        <div className="relative ml-[5px] flex h-[10px] w-[100px] items-center">
          <div className="h-px w-full bg-white" />
          <div className="absolute left-[49px] top-[2px] h-[6px] w-px bg-white" />
          <div className="absolute left-[39px] top-0 h-[10px] w-[5px] bg-white" />
        </div>
        <div className="relative ml-[5px] h-[9px] w-[9px]">
          <div className="absolute left-0 top-[4px] h-px w-[9px] bg-[#e8c8bc]" />
          <div className="absolute left-[4px] top-0 h-[9px] w-px bg-[#e8c8bc]" />
        </div>
        <span className="ml-[11px] w-[23px] whitespace-nowrap text-[11.5px]">84%</span>
        <div className="ml-[11px] mr-[14px]">
          <Ico w={16} h={16} c="#ffffff">
            <path d="M5 5H11V11H5ZM8 .5 6 2.5H10ZM8 15.5 6 13.5H10ZM.5 8 2.5 6V10ZM15.5 8 13.5 6V10Z" />
          </Ico>
        </div>
      </div>
    </div>
  )
}

const apps: { key: string; bg?: string; bar?: string; icon: ReactNode }[] = [
  {
    key: 'edge',
    icon: (
      <svg width="24" height="24" viewBox="0 0 24 26">
        <path d="M1 12C1 5 6 1 12 1S24 6 24 13C24 16 21 17 18 17 14 17 12 15 13 12 9 12 6 15 7 19 8 22 11 25 14 25 7 26 1 20 1 12Z" fill="#1379c8" />
        <path d="M1 12C2 6 7 3 12 3 18 3 21 7 21 9 16 6 8 6 1 12Z" fill="#2dc7b0" />
        <path d="M14 25C18 25 22 23 24 19 20 21 14 21 11 18 9 21 11 24 14 25Z" fill="#43c0e8" />
      </svg>
    ),
  },
  {
    key: 'files',
    icon: (
      <svg width="22" height="25" viewBox="0 0 22 25">
        <path d="M0 2H9L11 4H22V25H0Z" fill="#f6c858" />
        <path d="M0 2H9V6H0Z" fill="#e0a030" />
        <path d="M8 14H14L17 17V23H5V17Z" fill="#2d7dc8" />
        <path d="M9 19H13V23H9Z" fill="#f6c858" />
      </svg>
    ),
  },
  {
    key: 'mail',
    icon: (
      <svg width="25" height="22" viewBox="0 0 25 24">
        <path d="M0 9 12.5 0 25 9V24H0Z" fill="#1e6fc0" />
        <path d="M0 9 12.5 18 25 9V24H0Z" fill="#38a3e8" />
        <path d="M0 24 12.5 14 25 24Z" fill="#5cc0f2" />
        <path d="M4 6H21V11L12.5 17 4 11Z" fill="#ffffff" />
      </svg>
    ),
  },
  {
    key: 'dropbox',
    icon: (
      <svg width="24" height="21" viewBox="0 0 25 24" fill="#ffffff">
        <path d="M6.5 0 12.5 4 6.5 8 .5 4ZM18.5 0 24.5 4 18.5 8 12.5 4ZM6.5 8 12.5 12 6.5 16 .5 12ZM18.5 8 24.5 12 18.5 16 12.5 12ZM6.5 17.5 12.5 13.5 18.5 17.5 12.5 22Z" />
      </svg>
    ),
  },
  {
    key: 'slash',
    icon: (
      <svg width="12" height="24" viewBox="0 0 14 30" fill="#ffffff">
        <path d="M10 0 2 12 7 16 3 30 12 17 7 12Z" />
        <path d="M1 13 5 17 3 23ZM13 17 9 12 11 6Z" fill="#c8c8c8" />
      </svg>
    ),
  },
  {
    key: 'spotify',
    bg: 'bg-[#a86636]',
    bar: 'bg-[#f5780a]',
    icon: (
      <svg width="25" height="24" viewBox="0 0 25 25" fill="none" stroke="#1b1b1b" strokeWidth="2" strokeLinecap="round">
        <ellipse cx="12.5" cy="12.5" rx="12.5" ry="12.5" fill="#1ed760" stroke="none" />
        <path d="M5 9C10 7 15 7.5 20 10M6 13C10 11.5 15 12 19 14M7 17C10 16 14 16 17 18" />
      </svg>
    ),
  },
  {
    key: 'soundcloud',
    icon: (
      <svg width="24" height="12" viewBox="0 0 24 14" fill="#ffffff">
        <path d="M9 14V2C11-1 16 0 17 5 21 4 24 7 24 10S22 14 20 14ZM7 14V4H8V14ZM5 14V5H6V14ZM3 14V6H4V14ZM1 14V8H2V14Z" />
      </svg>
    ),
  },
  {
    key: 'wps',
    icon: (
      <svg width="21" height="22" viewBox="0 0 22 24">
        <rect width="22" height="24" rx="2" fill="#2c7ff0" />
        <path d="M4 7H18L14 18H12L11 13 10 18H8Z" fill="none" stroke="#ffffff" strokeWidth="1.5" />
      </svg>
    ),
  },
  {
    key: 'office',
    icon: (
      <svg width="19" height="24" viewBox="0 0 20 32" preserveAspectRatio="none">
        <path d="M0 7 13 0 20 4V27L13 32 0 26 12 27V6L5 9V22L0 26Z" fill="#d83b01" />
        <path d="M13 0 20 4V27L13 32Z" fill="#eb6d2e" />
        <path d="M0 7 5 9V22L0 26Z" fill="#a4262c" />
      </svg>
    ),
  },
  {
    key: 'powerpoint',
    bg: 'bg-[#5a5550]',
    bar: 'bg-[#4b8bc4]',
    icon: (
      <svg width="25" height="24" viewBox="0 0 26 26">
        <circle cx="14" cy="13" r="12" fill="#ed6c47" />
        <path d="M14 1A12 12 0 0 1 26 13H14Z" fill="#ff8f6b" />
        <path d="M14 13H26A12 12 0 0 1 14 25Z" fill="#d35230" />
        <rect y="6" width="13" height="13" rx="1" fill="#c43e1c" />
        <text x="6.5" y="16" textAnchor="middle" fontSize="10" fontWeight="700" fill="#ffffff">P</text>
      </svg>
    ),
  },
  {
    key: 'netflix',
    icon: (
      <svg width="24" height="24" viewBox="0 0 24 24">
        <rect width="24" height="24" fill="#0a0a0a" />
        <path d="M8 3H10.5L13.5 14V3H16V21H13.5L10.5 10V21H8Z" fill="#d81f26" />
      </svg>
    ),
  },
  {
    key: 'cc',
    bar: 'bg-[#4b8bc4]',
    icon: (
      <svg width="23" height="24" viewBox="0 0 22 26">
        <circle cx="11" cy="15" r="10" fill="#8cc63f" stroke="#d8e8c0" strokeWidth="2" />
        <circle cx="11" cy="15" r="4" fill="#ffffff" />
        <path d="M13 1 15 9M18 2 16 9M21 6 17 10" stroke="#d83b01" strokeWidth="1.5" />
      </svg>
    ),
  },
]

function Taskbar() {
  return (
    <div className="flex h-[40px] shrink-0 bg-gradient-to-r from-[#2e2523] via-[#3e3733] to-[#2a2522] text-white">
      <Cell className="w-[48px]">
        <svg width="16" height="16" viewBox="0 0 16 16" fill="#ffffff">
          <path d="M0 2.2 6.6 1.3V7.5H0ZM7.4 1.2 16 0V7.5H7.4ZM0 8.5H6.6V14.7L0 13.8ZM7.4 8.5H16V16L7.4 14.8Z" />
        </svg>
      </Cell>
      <Cell className="w-[48px]">
        <Ico c="#ffffff">
          <circle cx="9.5" cy="6" r="5" />
          <path d="M6 10 1 15.5" />
        </Ico>
      </Cell>
      <Cell className="w-[49px] pr-[2px]">
        <Ico c="#ffffff">
          <path d="M1 .5H12M1 15.5H12M2.5 4.5H11.5V11.5H2.5ZM14 4.5H16M14 7.5H16M14 10.5H16M14 1V3M14 13V15" />
        </Ico>
      </Cell>
      <div className="w-[2px] shrink-0" />
      {apps.map((a) => (
        <div key={a.key} className={`relative flex h-full w-[49px] shrink-0 items-center justify-center ${a.bg ?? ''}`}>
          {a.icon}
          {a.bar && <div className={`absolute bottom-0 left-0 right-0 h-[2px] ${a.bar}`} />}
        </div>
      ))}
      <div className="ml-auto flex">
        <Cell className="w-[26px]">
          <div className="flex h-[22px] w-[22px] items-center justify-center rounded-full border-2 border-white bg-[#0f88d8] text-[15px] font-bold leading-none">?</div>
        </Cell>
        <Cell className="w-[25px]">
          <Ico w={12} h={7} c="#ffffff">
            <path d="M.5 6.5 6 1 11.5 6.5" />
          </Ico>
        </Cell>
        <Cell className="w-[24px]">
          <Ico w={12} h={15} c="#ffffff">
            <path d="M.5 4.5H8V10.5H.5ZM8 6.5 11.5 5V10L8 8.5M2 1.5H7M2 13.5H7" />
          </Ico>
        </Cell>
        <Cell className="w-[24px]">
          <svg width="16" height="10" viewBox="0 0 16 10" fill="#d8d8d8">
            <path d="M3 10C0 10 0 6 3 6 3 2 8 1 10 3 13 3 16 6 15 10Z" />
          </svg>
        </Cell>
        <Cell className="w-[24px]">
          <Ico w={15} h={9} c="#ffffff">
            <path d="M.5 .5H13V8.5H.5ZM14.5 3V6" />
            <rect x="2" y="2" width="7" height="5" fill="#fff" stroke="none" />
          </Ico>
        </Cell>
        <Cell className="w-[26px]">
          <Ico c="#a8a8a8">
            <path d="M1 13C3 5 10 2 15 3M4 13C5 9 9 6 13 6M7 13C8 11 9 10 11 10" />
            <circle cx="11" cy="13" r="1.5" fill="#fff" stroke="none" />
          </Ico>
        </Cell>
        <Cell className="w-[20px]">
          <Ico w={15} h={14} c="#ffffff">
            <path d="M.5 4.5H3L7 1V13L3 9.5H.5ZM9.5 4.5C10.5 6 10.5 8 9.5 9.5" />
            <path d="M11.5 3C13 5 13 9 11.5 11" stroke="#a8a8a8" />
          </Ico>
        </Cell>
        <Cell className="w-[28px]">
          <svg width="16" height="11" viewBox="0 0 16 11">
            <path d="M3 11C0 11 0 7 3 6 3 2 8 0 10 3 13 2 16 6 15 11Z" fill="#ffffff" />
            <path d="M8 3.5V9M6 5.5 8 3.5 10 5.5" stroke="#2e2523" strokeWidth="1.3" fill="none" />
          </svg>
        </Cell>
        <Cell className="w-[32px] text-[12px]">VIE</Cell>
        <div className="flex w-[68px] flex-col items-center justify-center text-[12px] leading-[18px]">
          <span>9:01 PM</span>
          <span>2/26/2021</span>
        </div>
        <div className="relative w-[51px]">
          <div className="absolute left-[10px] top-[12px]">
            <svg width="16" height="15" viewBox="0 0 16 15" fill="#ffffff">
              <path d="M0 0H16V11H9L6 14V11H0Z" />
              <path d="M3 3H13M3 5.5H13M3 8H10" stroke="#888" strokeWidth=".7" />
            </svg>
          </div>
          <div className="absolute left-[17px] top-[20px] flex h-[17px] w-[17px] items-center justify-center rounded-full border border-[#9a9a9a] bg-[#3a3330] text-[10px] font-bold">3</div>
        </div>
      </div>
    </div>
  )
}

export default function App() {
  return (
    <div className="relative flex h-[768px] w-[1366px] flex-col overflow-hidden bg-white font-['Roboto',sans-serif]">
      <TitleBar />
      <TabRow />
      <Ribbon />
      <div className="relative flex min-h-0 flex-1 bg-white">
        <div className="h-full w-[249px] shrink-0 border-r border-[#c8c6c4]" />
        <div className="relative ml-[17px] h-[511px] w-[900px] shrink-0 border-b border-l border-[#bdbdbd] bg-white">
          <svg width="309" height="201" viewBox="0 0 309 201" className="absolute left-[334px] top-[98px]">
            <path d="M154.5 0 309 201H0Z" fill="#ef5566" />
          </svg>
        </div>
        <SidePanel />
        <div className="absolute inset-x-0 top-0 h-[5px] bg-gradient-to-b from-[#e2e2e2] to-transparent" />
      </div>
      <StatusBar />
      <Taskbar />
    </div>
  )
}
